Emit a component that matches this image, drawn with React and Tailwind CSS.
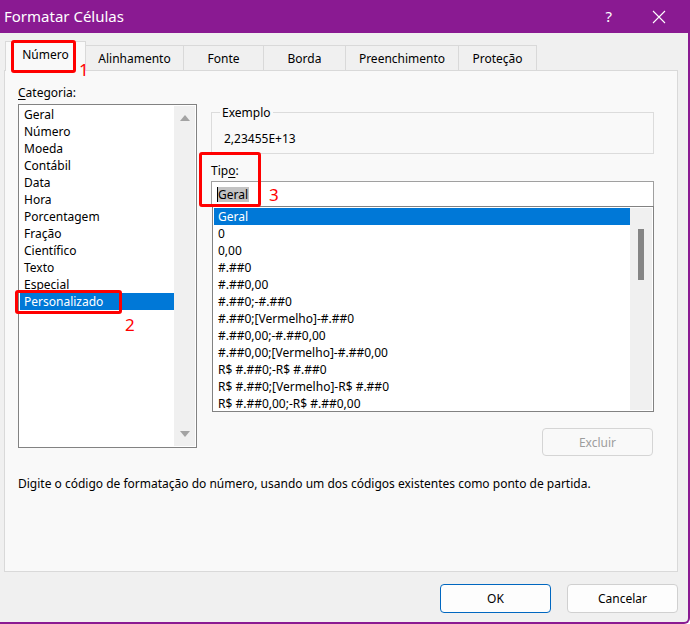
import React from 'react';

const categorias = [
	'Geral',
	'Número',
	'Moeda',
	'Contábil',
	'Data',
	'Hora',
	'Porcentagem',
	'Fração',
	'Científico',
	'Texto',
	'Especial',
	'Personalizado',
];

const tipos = [
	'Geral',
	'0',
	'0,00',
	'#.##0',
	'#.##0,00',
	'#.##0;-#.##0',
	'#.##0;[Vermelho]-#.##0',
	'#.##0,00;-#.##0,00',
	'#.##0,00;[Vermelho]-#.##0,00',
	'R$ #.##0;-R$ #.##0',
	'R$ #.##0;[Vermelho]-R$ #.##0',
	'R$ #.##0,00;-R$ #.##0,00',
];

const abas = [
	{ nome: 'Alinhamento', w: 'w-[98px]' },
	{ nome: 'Fonte', w: 'w-[80px]' },
	{ nome: 'Borda', w: 'w-[82px]' },
	{ nome: 'Preenchimento', w: 'w-[113px]' },
	{ nome: 'Proteção', w: 'w-[78px]' },
];

export default function App() {
	return (
		<div className="relative w-[690px] h-[624px] overflow-hidden bg-[#f0f0f0] border-r-2 border-b-2 border-[#8a1a92] rounded-br-[6px] font-['Noto_Sans',sans-serif] text-[12px] leading-[17px] text-black">
			{/* barra de titulo */}
			<div className="flex items-center h-[33px] bg-[#8a1a92] text-white">
				<span className="pl-[4px] text-[15px] leading-none">Formatar Células</span>
				<span className="ml-auto mr-[40px] text-[15px] leading-none">?</span>
				<svg className="mr-[22px]" width="14" height="14" viewBox="0 0 14 14" fill="none" stroke="white" strokeWidth="1.1">
					<path d="M1 1l12 12M13 1L1 13" />
				</svg>
			</div>

			{/* abas */}
			<div className="flex items-end h-[37px] pl-[5px]">
				<div className="relative z-10 flex items-center justify-center w-[81px] h-[30px] -mb-px pb-[4px] bg-[#f9f9f9] border border-b-0 border-[#d9d9d9]">
					Número
				</div>
				{abas.map((a) => (
					<div
						key={a.nome}
						className={`flex items-center justify-center ${a.w} h-[25px] bg-[#f0f0f0] border border-l-0 border-b-0 border-[#d9d9d9]`}
					>
						{a.nome}
					</div>
				))}
			</div>

			{/* painel */}
			<div className="ml-[4px] w-[674px] h-[502px] bg-[#f9f9f9] border border-[#d9d9d9] pl-[13px]">
				<div className="flex gap-[14px] pt-[13px]">
					<div className="w-[179px]">
						<div className="h-[20px]">
							<span className="underline underline-offset-2">C</span>ategoria:
						</div>
						<div className="flex h-[344px] bg-white border border-[#828282] p-px">
							<ul className="flex-1">
								{categorias.map((c) => (
									<li
										key={c}
										className={`h-[17px] pl-[4px] ${c === 'Personalizado' ? 'bg-[#0078d7] text-white' : ''}`}
									>
										{c}
									</li>
								))}
							</ul>
							<div className="flex flex-col items-center justify-between w-[21px] py-[9px] bg-[#f0f0f0] text-[#a3a3a3]">
								<svg width="10" height="6" viewBox="0 0 10 6">
									<path d="M5 0L10 6H0z" fill="currentColor" />
								</svg>
								<svg width="10" height="6" viewBox="0 0 10 6">
									<path d="M0 0H10L5 6z" fill="currentColor" />
								</svg>
							</div>
						</div>
					</div>

					<div className="w-[443px]">
						<fieldset className="mt-[20px] h-[50px] border border-[#dcdcdc] px-[8px]">
							<legend className="px-[2px]">Exemplo</legend>
							<div className="pl-[4px] pt-[9px]">2,23455E+13</div>
						</fieldset>
						<div className="mt-[8px] h-[19px]">
							Tip<span className="underline underline-offset-2">o</span>:
						</div>
						<div className="flex items-center h-[26px] bg-white border border-[#a0a0a0] pl-[5px]">
							<span className="w-px h-[15px] bg-black" />
							<span className="bg-[#c3c3c3] leading-[15px] pr-[1px]">Geral</span>
						</div>
						<div className="flex h-[206px] -mt-px ml-px bg-white border border-[#828282] p-px">
							<ul className="flex-1">
								{tipos.map((t, i) => (
									<li
										key={i}
										className={`h-[17px] pl-[4px] whitespace-nowrap ${i === 0 ? 'bg-[#0078d7] text-white' : ''}`}
									>
										{t}
									</li>
								))}
							</ul>
							<div className="w-[22px] bg-[#f0f0f0] pt-[21px] pl-[8px]">
								<div className="w-[6px] h-[51px] bg-[#858585]" />
							</div>
						</div>
						<div className="flex justify-end mt-[16px] pr-[1px]">
							<button className="w-[111px] h-[28px] rounded-[4px] border border-[#d5d5d5] bg-[#f9f9f9] text-[#9d9d9d]">
								Excluir
							</button>
						</div>
					</div>
				</div>
				<p className="mt-[19px]">
					Digite o código de formatação do número, usando um dos códigos existentes como ponto de partida.
				</p>
			</div>

			{/* rodape */}
			<div className="flex justify-end gap-[16px] mt-[12px] pr-[10px]">
				<button className="w-[111px] h-[29px] rounded-[4px] border border-[#0067c0] bg-[#fdfdfd]">OK</button>
				<button className="w-[111px] h-[29px] rounded-[4px] border border-[#d0d0d0] bg-[#fdfdfd]">Cancelar</button>
			</div>

			{/* marcacoes em vermelho */}
			<div className="absolute z-20 left-[11px] top-[40px] w-[65px] h-[33px] border-[3px] border-[#ff0000] rounded-[3px]" />
			<span className="absolute z-20 left-[79px] top-[60px] text-[17px] leading-[20px] text-[#ff0000]">1</span>
			<div className="absolute z-20 left-[15px] top-[290px] w-[107px] h-[24px] border-[3px] border-[#ff0000] rounded-[3px]" />
			<span className="absolute z-20 left-[125px] top-[315px] text-[17px] leading-[20px] text-[#ff0000]">2</span>
			<div className="absolute z-20 left-[199px] top-[152px] w-[62px] h-[55px] border-[3px] border-[#ff0000] rounded-[3px]" />
			<span className="absolute z-20 left-[269px] top-[185px] text-[17px] leading-[20px] text-[#ff0000]">3</span>
		</div>
	);
}
